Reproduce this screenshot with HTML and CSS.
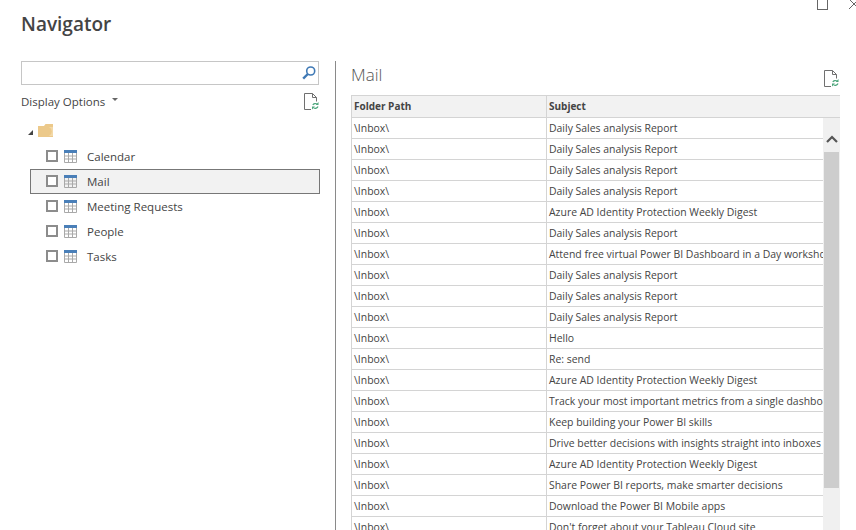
FILE: index.html
```html
<!DOCTYPE html>
<html lang="en">
<head>
    <meta charset="UTF-8">
    <meta name="viewport" content="width=device-width, initial-scale=1.0">
    <title>Navigator</title>
    <link rel="stylesheet" href="styles.css">
</head>
<body>
    <div class="window-controls">
        <span class="maximize"></span>
        <svg class="close" width="10" height="10" viewBox="0 0 10 10"><path d="M0 0L10 10M10 0L0 10" stroke="#666" stroke-width="1" fill="none"/></svg>
    </div>
    <h1>Navigator</h1>
    <div class="columns">
        <div class="left-pane">
            <div class="search">
                <svg width="16" height="16" viewBox="0 0 16 16"><circle cx="9.7" cy="6" r="4" stroke="#3f79b5" stroke-width="1.6" fill="none"/><path d="M6.8 9L2.2 13.6" stroke="#3f79b5" stroke-width="2.4" fill="none"/></svg>
            </div>
            <div class="options">
                <span>Display Options</span>
                <span class="caret"></span>
                <svg class="refresh" width="15" height="17" viewBox="0 0 15 17"><use href="#refresh-icon"/></svg>
            </div>
            <div class="tree-root">
                <span class="expander"></span>
                <svg width="16" height="14" viewBox="0 0 16 14"><path d="M0 2H6L7.500 0H15V13H0Z" fill="#ecc98a"/><path d="M11 3A5 5 0 0 1 11 12H15V3Z" fill="#f3d9a9"/></svg>
            </div>
            <ul class="tree">
                <li><span class="check"></span><svg class="grid-icon" width="13" height="13" viewBox="0 0 13 13"><use href="#table-icon"/></svg>Calendar</li>
                <li class="selected"><span class="check"></span><svg class="grid-icon" width="13" height="13" viewBox="0 0 13 13"><use href="#table-icon"/></svg>Mail</li>
                <li><span class="check"></span><svg class="grid-icon" width="13" height="13" viewBox="0 0 13 13"><use href="#table-icon"/></svg>Meeting Requests</li>
                <li><span class="check"></span><svg class="grid-icon" width="13" height="13" viewBox="0 0 13 13"><use href="#table-icon"/></svg>People</li>
                <li><span class="check"></span><svg class="grid-icon" width="13" height="13" viewBox="0 0 13 13"><use href="#table-icon"/></svg>Tasks</li>
            </ul>
        </div>
        <div class="right-pane">
            <div class="preview-head">
                <h2>Mail</h2>
                <svg class="refresh" width="15" height="17" viewBox="0 0 15 17"><use href="#refresh-icon"/></svg>
            </div>
            <div class="table-wrap">
                <div class="table-row table-header"><div>Folder Path</div><div>Subject</div></div>
                <div class="table-body">
                    <div class="rows">
                        <div class="table-row"><div>\Inbox\</div><div>Daily Sales analysis Report</div></div>
                        <div class="table-row"><div>\Inbox\</div><div>Daily Sales analysis Report</div></div>
                        <div class="table-row"><div>\Inbox\</div><div>Daily Sales analysis Report</div></div>
                        <div class="table-row"><div>\Inbox\</div><div>Daily Sales analysis Report</div></div>
                        <div class="table-row"><div>\Inbox\</div><div>Azure AD Identity Protection Weekly Digest</div></div>
                        <div class="table-row"><div>\Inbox\</div><div>Daily Sales analysis Report</div></div>
                        <div class="table-row"><div>\Inbox\</div><div>Attend free virtual Power BI Dashboard in a Day workshop</div></div>
                        <div class="table-row"><div>\Inbox\</div><div>Daily Sales analysis Report</div></div>
                        <div class="table-row"><div>\Inbox\</div><div>Daily Sales analysis Report</div></div>
                        <div class="table-row"><div>\Inbox\</div><div>Daily Sales analysis Report</div></div>
                        <div class="table-row"><div>\Inbox\</div><div>Hello</div></div>
                        <div class="table-row"><div>\Inbox\</div><div>Re: send</div></div>
                        <div class="table-row"><div>\Inbox\</div><div>Azure AD Identity Protection Weekly Digest</div></div>
                        <div class="table-row"><div>\Inbox\</div><div>Track your most important metrics from a single dashboard</div></div>
                        <div class="table-row"><div>\Inbox\</div><div>Keep building your Power BI skills</div></div>
                        <div class="table-row"><div>\Inbox\</div><div>Drive better decisions with insights straight into inboxes</div></div>
                        <div class="table-row"><div>\Inbox\</div><div>Azure AD Identity Protection Weekly Digest</div></div>
                        <div class="table-row"><div>\Inbox\</div><div>Share Power BI reports, make smarter decisions</div></div>
                        <div class="table-row"><div>\Inbox\</div><div>Download the Power BI Mobile apps</div></div>
                        <div class="table-row"><div>\Inbox\</div><div>Don't forget about your Tableau Cloud site</div></div>
                    </div>
                    <div class="scrollbar">
                        <svg width="12" height="8" viewBox="0 0 12 8"><path d="M1 7L6 2L11 7" stroke="#555" stroke-width="2.2" fill="none"/></svg>
                        <div class="thumb"></div>
                    </div>
                </div>
            </div>
        </div>
    </div>
    <svg width="0" height="0" class="defs">
        <symbol id="table-icon" viewBox="0 0 13 13"><rect width="13" height="3" fill="#4a7fb8"/><path d="M.5 3V12.5H12.5V3M.5 6H12.5M.5 9H12.500M4.500 3V12.5M8.500 3V12.5" stroke="#a9a9a9" fill="none"/></symbol>
        <symbol id="refresh-icon" viewBox="0 0 15 17"><path d="M7 16.500H.5V.5H8.500L12.500 4.500V8.500M8.500.5V4.500H12.500" stroke="#707070" fill="none"/><path d="M8.800 12A3 3 0 0 1 13 11M14 13.500A3 3 0 0 1 9.800 15" stroke="#4da67c" stroke-width="1.2" fill="none"/><path d="M14.500 9V12H11.500ZM8 16.500V13.500H11Z" fill="#4da67c"/></symbol>
    </svg>
</body>
</html>
```

FILE: styles.css
```css
html, body {
    height: 100%;
}
body {
    margin: 0;
    overflow: hidden;
    background: #fff;
    color: #444;
    font-family: 'Open Sans', sans-serif;
    font-size: 12px;
    position: relative;
}
h1 {
    margin: 0;
    padding: 12px 0 0 21px;
    height: 61px;
    box-sizing: border-box;
    font-size: 19px;
    line-height: 25px;
    font-weight: 600;
    color: #444;
}
.window-controls {
    position: absolute;
    top: -1px;
    left: 817px;
    display: flex;
    gap: 21px;
}
.maximize {
    width: 9px;
    height: 9px;
    border: 1px solid #666;
}
.defs {
    position: absolute;
}

.columns {
    display: flex;
    height: 469px;
}
.left-pane {
    width: 314px;
    margin-left: 21px;
    flex: none;
}
.search {
    width: 298px;
    height: 24px;
    box-sizing: border-box;
    border: 1px solid #c6c6c6;
    display: flex;
    align-items: center;
    justify-content: flex-end;
    padding-right: 1px;
}
.options {
    display: flex;
    align-items: center;
    width: 298px;
    height: 18px;
    margin-top: 7px;
    font-size: 11.5px;
}
.caret {
    margin-left: 7px;
    margin-bottom: 3px;
    border: 3px solid transparent;
    border-top-color: #666;
    border-bottom: 0;
    width: 0;
}
.options .refresh {
    margin-left: auto;
}
.tree-root {
    display: flex;
    align-items: center;
    margin: 14px 0 0 7px;
    height: 14px;
}
.expander {
    width: 0;
    height: 0;
    margin-right: 5px;
    margin-top: 3px;
    border-left: 5px solid transparent;
    border-bottom: 5px solid #444;
}
.tree {
    list-style: none;
    margin: 6px 0 0 9px;
    padding: 0;
    width: 290px;
    font-size: 11.5px;
}
.tree li {
    display: flex;
    align-items: center;
    height: 25px;
    box-sizing: border-box;
    padding-left: 16px;
}
.tree li.selected {
    background: #f2f2f2;
    border: 1px solid #777;
    padding-left: 15px;
}
.check {
    width: 8px;
    height: 8px;
    border: 2px solid #8c8c8c;
    background: #fff;
    margin: 0 6px 1px 0;
}
.grid-icon {
    margin: 0 10px 1px 0;
}

.right-pane {
    flex: 1;
    border-left: 1px solid #8a8a8a;
    padding-left: 15px;
    min-width: 0;
}
.preview-head {
    display: flex;
    justify-content: space-between;
    height: 34px;
    width: 488px;
}
h2 {
    margin: 0;
    padding-top: 2px;
    font-size: 17px;
    line-height: 24px;
    font-weight: 300;
    color: #555;
}
.preview-head .refresh {
    margin-top: 9px;
}
.table-wrap {
    width: 488px;
    font-size: 10.45px;
    border-left: 1px solid #d4d4d4;
}
.table-row {
    display: flex;
    height: 21px;
    box-sizing: border-box;
    border-bottom: 1px solid #d4d4d4;
    line-height: 20px;
    white-space: nowrap;
}
.table-row > div {
    padding-left: 2px;
    overflow: hidden;
}
.table-row > div:first-child {
    width: 192px;
    flex: none;
    border-right: 1px solid #d4d4d4;
}
.table-row > div:last-child {
    flex: 1;
    min-width: 0;
}
.table-header {
    height: 23px;
    background: #f2f2f2;
    border-top: 1px solid #d4d4d4;
    font-weight: 700;
    font-size: 10px;
}
.table-body {
    display: flex;
}
.rows {
    flex: 1;
    min-width: 0;
}
.scrollbar {
    width: 17px;
    flex: none;
    background: #f0f0f0;
    display: flex;
    flex-direction: column;
    align-items: center;
    height: 412px;
}
.scrollbar svg {
    margin-top: 17px;
}
.thumb {
    width: 15px;
    height: 336px;
    margin-top: 9px;
    background: #cdcdcd;
}
```
